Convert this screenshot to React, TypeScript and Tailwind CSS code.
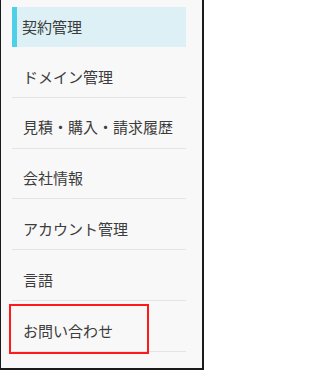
import React from "react";

const items = [
    "ドメイン管理",
    "見積・購入・請求履歴",
    "会社情報",
    "アカウント管理",
    "言語",
    "お問い合わせ",
];

const App: React.FunctionComponent = () => {
    return (
        <div
            className="relative w-[204px] h-[370px] bg-[#f8f8f8] border-l border-r-2 border-b-2 border-[#1a1a1a] overflow-hidden"
            style={{ fontFamily: '"Noto Sans CJK JP", "Noto Sans", sans-serif' }}
        >
            <ul className="ml-[11px] mr-[16px] pt-[7px]">
                {/* current page */}
                <li className="flex items-center h-[40px] bg-[#dcf0f5] border-l-[5px] border-[#4dd0e8] pl-[5px] text-[15px] text-[#3c3c3c]">
                    契約管理
                </li>
                {items.map((label) => (
                    <li
                        key={label}
                        className="flex items-center mt-[10px] h-[40.8px] border-b border-[#e4e4e4] pl-[11px] text-[15px] text-[#3c3c3c]"
                    >
                        {label}
                    </li>
                ))}
            </ul>
            {/* annotation box */}
            <div className="absolute left-[8px] top-[304px] w-[140px] h-[50px] border-2 border-[#ff1a1a]" />
        </div>
    );
};

export default App;
